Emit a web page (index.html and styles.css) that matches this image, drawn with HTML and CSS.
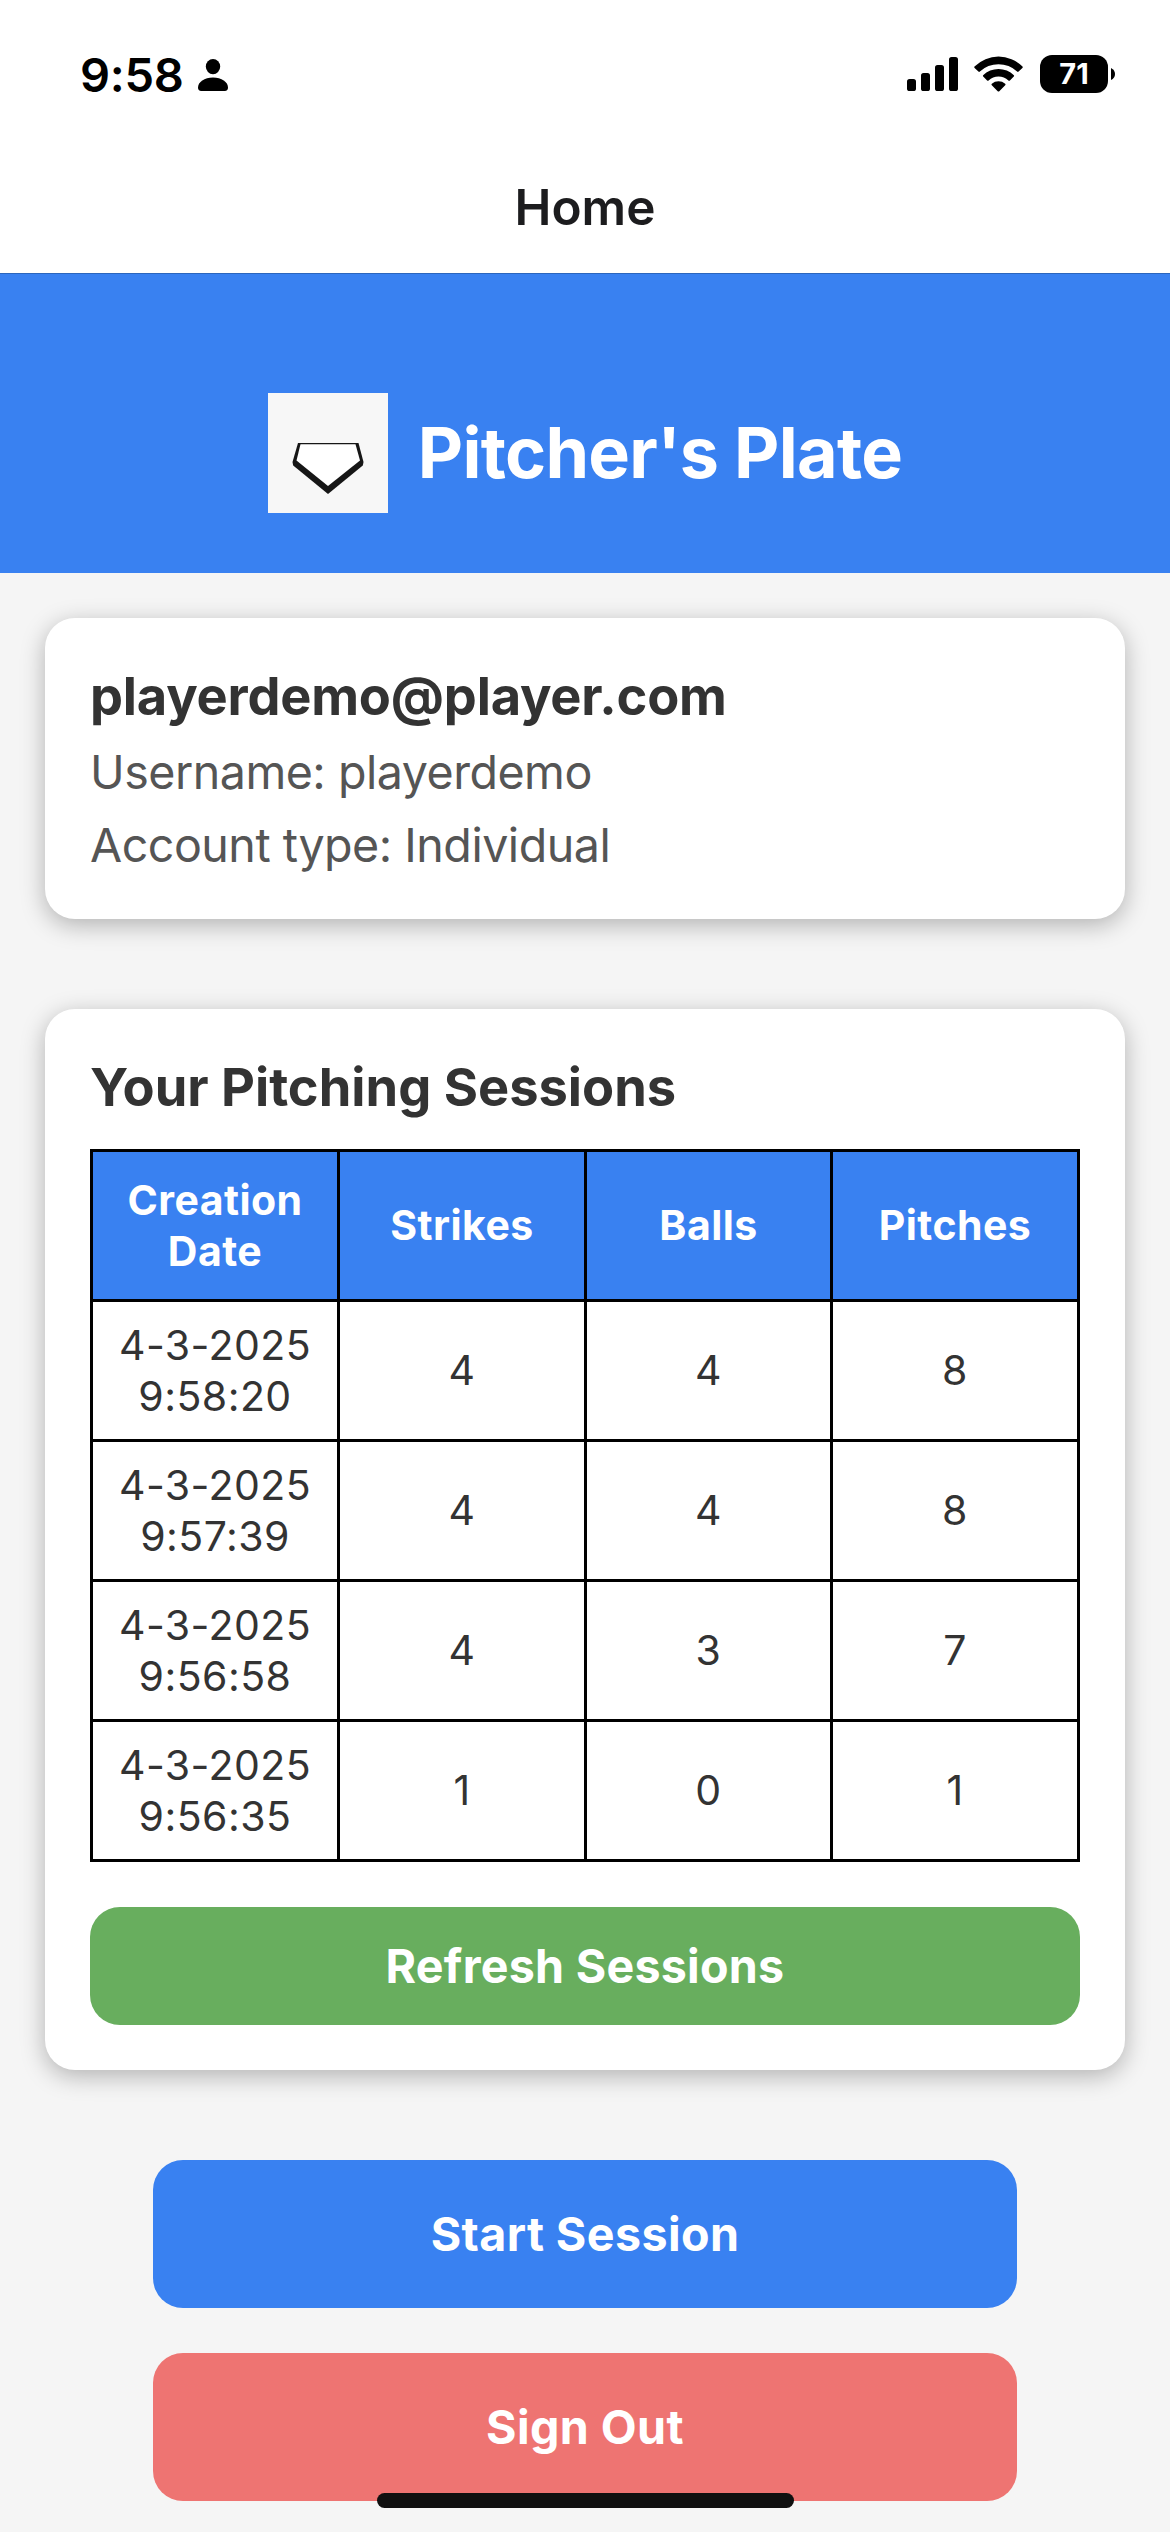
FILE: index.html
```html
<!DOCTYPE html>
<html lang="en">
<head>
<meta charset="utf-8">
<title>Home</title>
<link rel="stylesheet" href="styles.css">
</head>
<body>
<div class="screen">
  <div class="status-bar">
    <div class="status-left">
      <span class="clock">9:58</span>
      <svg class="person" width="30" height="32" viewBox="0 0 30 32"><ellipse cx="15" cy="7.6" rx="7.2" ry="7.6"/><path d="M0 28.6C0 23 6.500 18.600 15 18.600S30 23 30 28.600Q30 32 26.800 32H3.200Q0 32 0 28.600Z"/></svg>
    </div>
    <div class="status-right">
      <svg class="signal" width="51" height="34" viewBox="0 0 51 34"><rect y="22" width="9" height="12" rx="2.6"/><rect x="14" y="16" width="9" height="18" rx="2.6"/><rect x="28" y="8" width="9" height="26" rx="2.6"/><rect x="42" width="9" height="34" rx="2.6"/></svg>
      <svg class="wifi" width="49" height="36" viewBox="0 0 49 36"><path d="M.5 10.500Q0 11.200.6 11.900L4.400 15.600Q5.100 16.300 5.900 15.600A27 27 0 0 1 43.100 15.600Q43.900 16.300 44.600 15.600L48.400 11.900Q49 11.200 48.500 10.500A34 34 0 0 0 .5 10.500Z"/><path d="M9.100 19.200Q8.500 19.900 9.200 20.600L13.100 24.400Q13.800 25.100 14.600 24.400A14.500 14.500 0 0 1 34.400 24.400Q35.200 25.100 35.900 24.400L39.800 20.600Q40.500 19.900 39.900 19.200A22 22 0 0 0 9.100 19.200Z"/><path d="M17.800 27.700Q17 28.400 17.800 29.200L23.700 35.200Q24.500 36 25.300 35.200L31.200 29.200Q32 28.400 31.200 27.700A10.500 10.500 0 0 0 17.800 27.700Z"/></svg>
      <div class="battery"><div class="battery-body">71</div><svg width="4" height="12" viewBox="0 0 4 12"><path d="M0 0Q4 2 4 6T0 12Z"/></svg></div>
    </div>
  </div>
  <nav class="nav"><span class="nav-title">Home</span></nav>
  <header class="banner">
    <svg class="logo" width="120" height="120" viewBox="0 0 120 120"><rect width="120" height="120" fill="#f7f7f7"/><path d="M30 50H90.500L95.500 69L94.800 72.500L60 101L25.200 72.500L24.500 69Z" fill="#161616"/><path d="M32.500 51.200H87.500L92 67.500L60 93L28.500 67.500Z" fill="#fff"/></svg>
    <h1 class="brand">Pitcher's Plate</h1>
  </header>
  <main class="content">
    <section class="card account">
      <h2 class="card-title email">playerdemo@player.com</h2>
      <p class="detail username">Username: playerdemo</p>
      <p class="detail type">Account type: Individual</p>
    </section>
    <section class="card sessions">
      <h2 class="card-title heading">Your Pitching Sessions</h2>
      <div class="table">
        <div class="th">Creation<br>Date</div><div class="th">Strikes</div><div class="th">Balls</div><div class="th">Pitches</div>
        <div class="td">4-3-2025<br>9:58:20</div><div class="td">4</div><div class="td">4</div><div class="td">8</div>
        <div class="td">4-3-2025<br>9:57:39</div><div class="td">4</div><div class="td">4</div><div class="td">8</div>
        <div class="td">4-3-2025<br>9:56:58</div><div class="td">4</div><div class="td">3</div><div class="td">7</div>
        <div class="td">4-3-2025<br>9:56:35</div><div class="td">1</div><div class="td">0</div><div class="td">1</div>
      </div>
      <button class="button refresh">Refresh Sessions</button>
    </section>
    <div class="actions">
      <button class="button start">Start Session</button>
      <button class="button signout">Sign Out</button>
    </div>
  </main>
  <div class="home-indicator"></div>
</div>
</body>
</html>
```
FILE: styles.css
```css
* { box-sizing: border-box; margin: 0; padding: 0; }
body { font-family: Inter, "Liberation Sans", sans-serif; background: #f5f5f5; }
.screen { position: relative; width: 1170px; height: 2532px; overflow: hidden; background: #f5f5f5; }
.status-bar { height: 141px; padding: 45px 55px 0 80px; display: flex; justify-content: space-between; align-items: flex-start; background: #fff; }
.status-left { display: flex; align-items: center; gap: 14px; height: 60px; }
.clock { font-size: 47px; font-weight: 560; line-height: 60px; letter-spacing: -.3px; }
.status-right { display: flex; align-items: center; height: 58px; }
.signal { margin-right: 16px; }
.wifi { margin-right: 17px; }
.battery { display: flex; align-items: center; gap: 3px; }
.battery-body { width: 68px; height: 38px; border-radius: 12px; background: #000; color: #fff; font-size: 29px; font-weight: 700; line-height: 38px; text-align: center; }
.nav { height: 132px; background: #fff; text-align: center; }
.nav-title { font-size: 49.5px; font-weight: 600; line-height: 132px; color: #1c1c1e; }
.banner { height: 300px; padding: 119px 0 60px; border-top: 1px solid #2c66bd; background: #3981f1; display: flex; justify-content: center; align-items: center; gap: 30px; }
.brand { font-size: 70px; font-weight: 700; line-height: 86px; letter-spacing: -.7px; color: #fff; white-space: nowrap; }
.content { padding: 45px 45px 0; }
.card { padding: 45px; border-radius: 30px; background: #fff; box-shadow: 0 6px 24px rgba(0, 0, 0, .28); }
.card-title { font-size: 52.4px; font-weight: 700; line-height: 66px; color: #333; white-space: nowrap; }
.email { letter-spacing: -.2px; }
.detail { font-size: 46.6px; line-height: 57px; letter-spacing: -.5px; color: #555; white-space: nowrap; }
.username { margin-top: 15px; }
.type { margin-top: 16px; }
.sessions { margin-top: 90px; }
.table { margin-top: 29px; padding: 3px; display: grid; grid-template-columns: 244px 244px 243px 244px; grid-template-rows: 147px repeat(4, 137px); gap: 3px; background: #000; }
.th, .td { display: flex; align-items: center; justify-content: center; text-align: center; line-height: 51px; font-size: 41px; letter-spacing: .45px; }
.th { background: #3981f1; color: #fff; font-weight: 700; }
.td { background: #fff; color: #333; }
.button { display: block; width: 100%; border: 0; border-radius: 30px; color: #fff; font-family: inherit; font-size: 46.6px; font-weight: 700; letter-spacing: .4px; }
.refresh { height: 118px; margin-top: 45px; letter-spacing: .25px; background: #68ae5e; }
.actions { margin-top: 90px; padding: 0 108px; display: grid; gap: 45px; }
.start { height: 148px; background: #3981f1; }
.signout { height: 148px; background: #ee7472; }
.home-indicator { position: absolute; left: 377px; bottom: 24px; width: 417px; height: 15px; border-radius: 8px; background: #101010; }
```
